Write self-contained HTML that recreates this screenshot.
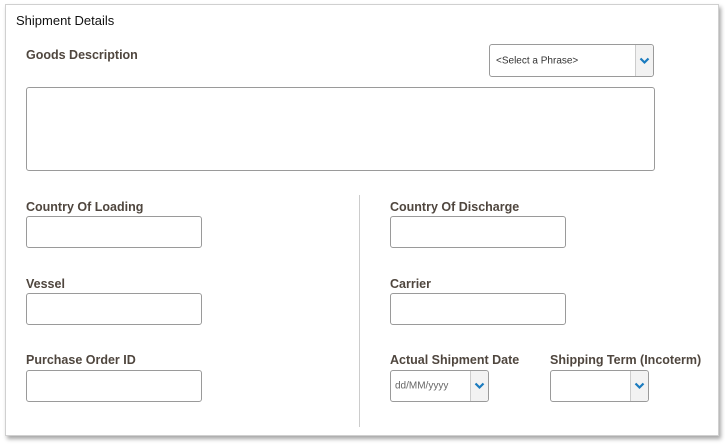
<!DOCTYPE html>
<html><head><style>
body{margin:0;width:725px;height:446px;background:#fff;font-family:"Liberation Sans",sans-serif;position:relative;overflow:hidden}
.panel{position:absolute;left:5px;top:4px;width:712px;height:430px;border:1px solid #d0d0d0;box-shadow:2px 3px 4px rgba(0,0,0,.35);background:#fff}
.a{position:absolute}
.t{left:16px;top:13px;font-size:13px;color:#111}
.l{font-size:12.5px;font-weight:bold;color:#4f463e;white-space:nowrap}
.in{border:1px solid #9a9a9a;border-radius:3px;background:#fff;box-sizing:border-box}
.arr{position:absolute;right:0;top:0;bottom:0;width:17px;background:#f2f2f2;border-left:1px solid #ccc;border-radius:0 3px 3px 0}
.arr svg{position:absolute;left:3px;top:50%;margin-top:-4px}
.ph{font-size:10px;color:#333;position:absolute;left:6px;top:50%;transform:translateY(-50%)}
</style></head><body>
<div class="panel"></div>
<div class="a t">Shipment Details</div>
<div class="a l" style="left:26px;top:48px">Goods Description</div>
<div class="a in" style="left:489px;top:44px;width:165px;height:33px"><span class="ph">&lt;Select a Phrase&gt;</span><div class="arr"><svg width="11" height="8"><path d="M1.5 1.5L5.5 5.5L9.5 1.5" stroke="#1a7bbf" stroke-width="2.2" fill="none"/></svg></div></div>
<div class="a in" style="left:26px;top:87px;width:629px;height:84px"></div>
<div class="a" style="left:359px;top:195px;width:1px;height:232px;background:#ccc"></div>
<div class="a l" style="left:26px;top:200px">Country Of Loading</div>
<div class="a in" style="left:26px;top:216px;width:176px;height:32px"></div>
<div class="a l" style="left:26px;top:277px">Vessel</div>
<div class="a in" style="left:26px;top:293px;width:176px;height:32px"></div>
<div class="a l" style="left:26px;top:353px">Purchase Order ID</div>
<div class="a in" style="left:26px;top:370px;width:176px;height:32px"></div>
<div class="a l" style="left:390px;top:200px">Country Of Discharge</div>
<div class="a in" style="left:390px;top:216px;width:176px;height:32px"></div>
<div class="a l" style="left:390px;top:277px">Carrier</div>
<div class="a in" style="left:390px;top:293px;width:176px;height:32px"></div>
<div class="a l" style="left:390px;top:353px">Actual Shipment Date</div>
<div class="a in" style="left:390px;top:370px;width:99px;height:32px"><span class="ph" style="left:4px;color:#666">dd/MM/yyyy</span><div class="arr"><svg width="11" height="8"><path d="M1.5 1.5L5.5 5.5L9.5 1.5" stroke="#1a7bbf" stroke-width="2.2" fill="none"/></svg></div></div>
<div class="a l" style="left:550px;top:353px">Shipping Term (Incoterm)</div>
<div class="a in" style="left:550px;top:370px;width:99px;height:32px"><div class="arr"><svg width="11" height="8"><path d="M1.5 1.5L5.5 5.5L9.5 1.5" stroke="#1a7bbf" stroke-width="2.2" fill="none"/></svg></div></div>
</body></html>
